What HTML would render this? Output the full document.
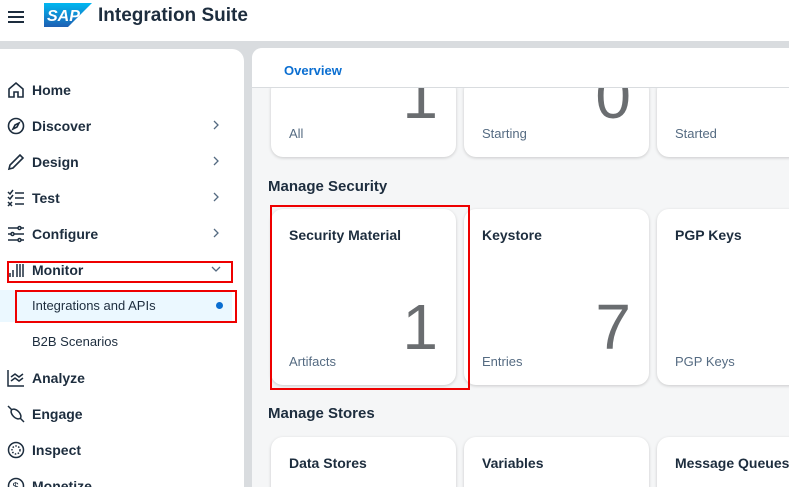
<!DOCTYPE html>
<html><head><style>
*{margin:0;padding:0;box-sizing:border-box}
html,body{width:789px;height:487px;overflow:hidden}
body{background:#d9dcdf;font-family:"Liberation Sans",sans-serif;position:relative;color:#1d2d3e}
.hdr{position:absolute;left:0;top:0;width:789px;height:41px;background:#fff}
.side{position:absolute;left:0;top:49px;width:244px;height:438px;background:#fff;border-top-right-radius:12px;overflow:hidden}
.item{position:absolute;left:32px;font-size:14px;font-weight:bold;color:#1d2d3e}
.sub{position:absolute;left:32px;font-size:13px;color:#1d2d3e}
.chev{position:absolute;left:211px;width:10px;height:10px}
.ic{position:absolute;left:7px;width:18px;height:18px}
.main{position:absolute;left:252px;top:48px;width:540px;height:439px;background:#f5f6f7;border-top-left-radius:10px;overflow:hidden}
.tabs{position:absolute;left:0;top:0;width:100%;height:40px;background:#fff;border-bottom:1px solid #d9dcdf;z-index:5}
.tile{position:absolute;width:185px;background:#fff;border-radius:12px;box-shadow:0 1px 3px rgba(0,0,0,.18)}
.tt{position:absolute;left:18px;top:18px;font-size:14px;font-weight:bold}
.ts{position:absolute;left:18px;bottom:16px;font-size:13px;color:#556b82}
.num{position:absolute;right:18px;font-size:64px;color:#6a6d70;line-height:1}
.h{position:absolute;left:16px;font-size:15px;font-weight:bold;color:#1d2d3e}
.red{position:absolute;border:2px solid #e00;z-index:9}
</style></head><body>
<div class="hdr">
<div style="position:absolute;left:8px;top:11px;width:16px;height:2px;background:#1d2d3e;box-shadow:0 5px 0 #1d2d3e,0 10px 0 #1d2d3e"></div>
<svg style="position:absolute;left:44px;top:3px" width="48" height="24" viewBox="0 0 48 24"><defs><linearGradient id="g" x1="0" y1="0" x2="0" y2="1"><stop offset="0" stop-color="#00b8f1"/><stop offset="1" stop-color="#1e5fb3"/></linearGradient></defs><polygon points="0,0 48,0 24,24 0,24" fill="url(#g)"/><text x="3" y="18" font-family="Liberation Sans" font-weight="bold" font-style="italic" font-size="16" fill="#fff">SAP</text></svg>
<div style="position:absolute;left:98px;top:5px;font-size:19px;font-weight:bold;color:#1d2d3e">Integration Suite</div>
</div>
<div class="side">
<svg class="ic" style="top:32px" viewBox="0 0 18 18" fill="none" stroke="#1d2d3e" stroke-width="1.6"><path d="M2 8L9 2l7 6v8H11v-5H7v5H2z"/></svg>
<div class="item" style="top:33px">Home</div>
<svg class="ic" style="top:68px" viewBox="0 0 18 18" fill="none" stroke="#1d2d3e" stroke-width="1.6"><circle cx="9" cy="9" r="7.5"/><path d="M12 6l-2 4-4 2 2-4z"/></svg>
<div class="item" style="top:69px">Discover</div><svg class="chev" style="top:71px" viewBox="0 0 10 10" fill="none" stroke="#556b82" stroke-width="1.3"><path d="M3 1l4 4-4 4"/></svg>
<svg class="ic" style="top:104px" viewBox="0 0 18 18" fill="none" stroke="#1d2d3e" stroke-width="1.6"><path d="M2 16l1-4L13 2l3 3L6 15z"/></svg>
<div class="item" style="top:105px">Design</div><svg class="chev" style="top:107px" viewBox="0 0 10 10" fill="none" stroke="#556b82" stroke-width="1.3"><path d="M3 1l4 4-4 4"/></svg>
<svg class="ic" style="top:140px" viewBox="0 0 18 18" fill="none" stroke="#1d2d3e" stroke-width="1.5"><path d="M1 3l2 2 3-4M1 8l2 2 3-4M1 13l4 4M5 13l-4 4M8 4h9M8 9h9M8 15h9"/></svg>
<div class="item" style="top:141px">Test</div><svg class="chev" style="top:143px" viewBox="0 0 10 10" fill="none" stroke="#556b82" stroke-width="1.3"><path d="M3 1l4 4-4 4"/></svg>
<svg class="ic" style="top:176px" viewBox="0 0 18 18" fill="none" stroke="#1d2d3e" stroke-width="1.5"><path d="M1 3h10M14 3h3M1 9h3M7 9h10M1 15h10M14 15h3"/><circle cx="12.5" cy="3" r="1.5"/><circle cx="5.5" cy="9" r="1.5"/><circle cx="12.5" cy="15" r="1.5"/></svg>
<div class="item" style="top:177px">Configure</div><svg class="chev" style="top:179px" viewBox="0 0 10 10" fill="none" stroke="#556b82" stroke-width="1.3"><path d="M3 1l4 4-4 4"/></svg>
<svg class="ic" style="top:212px" viewBox="0 0 18 18" fill="none" stroke="#1d2d3e" stroke-width="1.5"><path d="M3 12v4M6 9v7M10 3v13M13 3v13M16 3v13"/></svg>
<div class="item" style="top:213px">Monitor</div><svg class="chev" style="top:215px" viewBox="0 0 10 10" fill="none" stroke="#556b82" stroke-width="1.3"><path d="M1 3l4 4 4-4"/></svg>
<div style="position:absolute;left:0;top:241px;width:232px;height:32px;background:#ebf8ff"></div>
<div class="sub" style="top:249px">Integrations and APIs</div>
<div style="position:absolute;left:216px;top:253px;width:7px;height:7px;border-radius:50%;background:#0a6ed1"></div>
<div class="sub" style="top:285px">B2B Scenarios</div>
<svg class="ic" style="top:320px" viewBox="0 0 18 18" fill="none" stroke="#1d2d3e" stroke-width="1.5"><path d="M1 1v16h16M4 8l4-3 4 3 4-3M4 12l4-3 4 3 4-3"/></svg>
<div class="item" style="top:321px">Analyze</div>
<svg class="ic" style="top:356px" viewBox="0 0 18 18" fill="none" stroke="#1d2d3e" stroke-width="1.5"><path d="M1 1l4 4M13 13l4 4"/><ellipse cx="9" cy="9" rx="6" ry="3.5" transform="rotate(45 9 9)"/></svg>
<div class="item" style="top:357px">Engage</div>
<svg class="ic" style="top:392px" viewBox="0 0 18 18" fill="none" stroke="#1d2d3e" stroke-width="1.5"><circle cx="9" cy="9" r="7.5"/><circle cx="9" cy="9" r="4" stroke-dasharray="1.5 1.5"/></svg>
<div class="item" style="top:393px">Inspect</div>
<svg class="ic" style="top:428px" viewBox="0 0 18 18" fill="none" stroke="#1d2d3e" stroke-width="1.5"><circle cx="9" cy="9" r="7.5"/><text x="5.5" y="13" font-size="11" fill="#1d2d3e" stroke="none">$</text></svg>
<div class="item" style="top:429px">Monetize</div>
</div>
<div class="red" style="left:7px;top:261px;width:226px;height:22px"></div>
<div class="red" style="left:15px;top:290px;width:222px;height:33px"></div>
<div class="main">
<div class="tabs"><div style="position:absolute;left:32px;top:15px;font-size:13px;font-weight:bold;color:#0a6ed1">Overview</div></div>
<div class="tile" style="left:19px;top:30px;height:79px"><div class="num" style="top:-14px">1</div><div class="ts">All</div></div>
<div class="tile" style="left:212px;top:30px;height:79px"><div class="num" style="top:-14px">0</div><div class="ts">Starting</div></div>
<div class="tile" style="left:405px;top:30px;height:79px"><div class="ts">Started</div></div>
<div class="h" style="top:130px">Manage Security</div>
<div class="tile" style="left:19px;top:161px;height:176px"><div class="tt">Security Material</div><div class="num" style="top:86px">1</div><div class="ts">Artifacts</div></div>
<div class="tile" style="left:212px;top:161px;height:176px"><div class="tt">Keystore</div><div class="num" style="top:86px">7</div><div class="ts">Entries</div></div>
<div class="tile" style="left:405px;top:161px;height:176px"><div class="tt">PGP Keys</div><div class="ts">PGP Keys</div></div>
<div class="h" style="top:357px">Manage Stores</div>
<div class="tile" style="left:19px;top:389px;height:100px"><div class="tt">Data Stores</div></div>
<div class="tile" style="left:212px;top:389px;height:100px"><div class="tt">Variables</div></div>
<div class="tile" style="left:405px;top:389px;height:100px"><div class="tt">Message Queues</div></div>
</div>
<div class="red" style="left:270px;top:205px;width:200px;height:185px"></div>
</body></html>
